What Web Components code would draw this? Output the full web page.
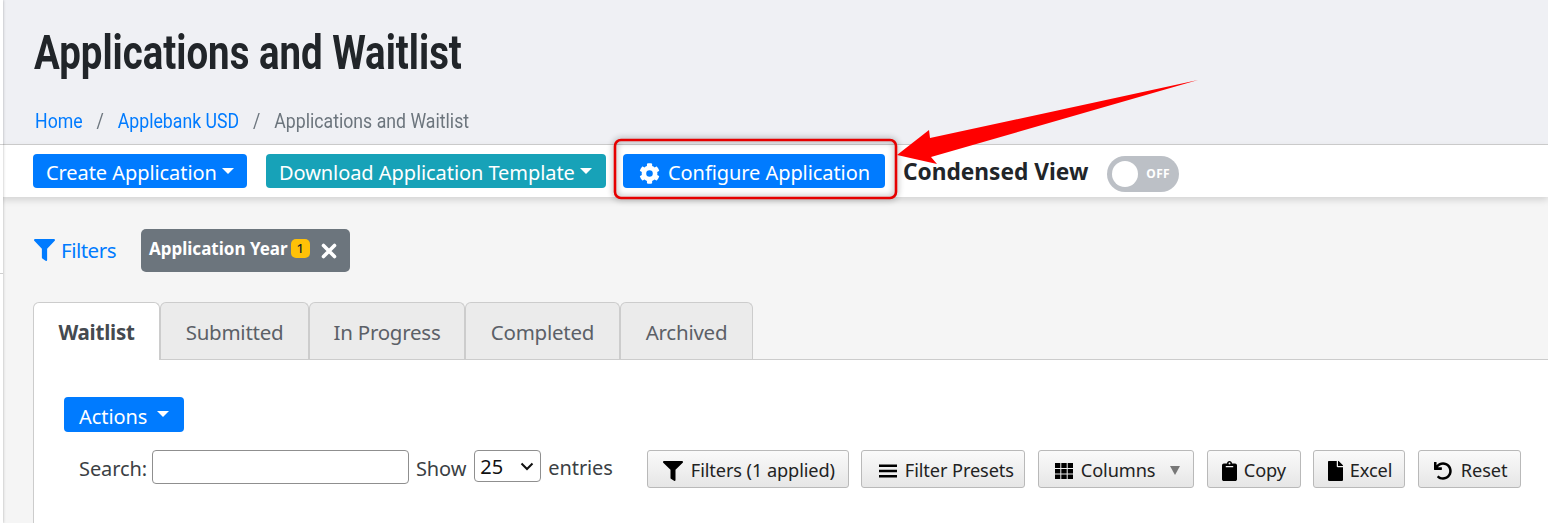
<!DOCTYPE html>
<html><head><meta charset="utf-8">
<style>
html,body{margin:0;padding:0;background:#f5f5f5;}
body{width:1548px;height:523px;overflow:hidden;font-family:"Noto Sans",sans-serif;}
</style></head><body>
<app-shell></app-shell>
<template id="t-btn"><style>
:host{display:inline-flex;align-items:center;box-sizing:border-box;height:var(--h,34px);padding:4px 0 0 var(--pl,13px);width:var(--w,auto);border-radius:4px;background:var(--bg,#007bff);color:#fff;font:20px/1 "Noto Sans",sans-serif;letter-spacing:-.07px;white-space:nowrap;gap:var(--gap,5px)}
.caret{width:0;height:0;border-left:6px solid transparent;border-right:6px solid transparent;border-top:6px solid #fff;margin-top:-5px}
svg{display:block;margin-top:-3px}
</style><slot name="icon"></slot><slot></slot><span class="caret"></span></template>
<template id="t-tool"><style>
:host{display:inline-flex;align-items:center;box-sizing:border-box;height:38px;width:var(--w);padding:3px 0 0 var(--pl,16px);border:1px solid #b9b9b9;border-radius:3px;background:linear-gradient(#fafafa,#e6e6e6);color:#222;font:18.200px/1 "Noto Sans",sans-serif;white-space:nowrap;gap:8px}
</style><slot name="icon"></slot><slot></slot></template>
<template id="t-tab"><style>
:host{display:flex;align-items:center;justify-content:center;box-sizing:border-box;height:57px;border:1px solid #ccc;border-bottom:0;border-radius:6px 6px 0 0;background:#ebebeb;color:#5b6067;font:20.5px/1 "Noto Sans",sans-serif;letter-spacing:-.25px;padding-top:3px}
:host([active]){background:#fff;height:58px;margin-bottom:-1px;font-weight:700;color:#454a50;z-index:1;position:relative;padding-top:3px;padding-bottom:2px}
</style><slot></slot></template>
<template id="t-toggle"><style>
:host{display:block;box-sizing:border-box;width:72px;height:36px;margin-top:6px;border-radius:18px;background:#bcc0c6;position:relative}
i{position:absolute;left:5px;top:5px;width:26px;height:26px;border-radius:50%;background:#fff}
b{position:absolute;left:39px;top:11.5px;font:700 12px/1 "Noto Sans",sans-serif;color:#fff;letter-spacing:.3px}
</style><i></i><b>OFF</b></template>
<template id="t-header"><style>
:host{display:block;box-sizing:border-box;height:145px;background:#eff0f4;border-bottom:1px solid #cfcfcf;padding:28px 0 0 34px}
h1{margin:0;font:700 48px/50px Roboto,sans-serif;color:#212529;transform:scaleX(.8);transform-origin:0 50%;white-space:nowrap}
nav{margin-top:30px;display:flex;font:20px/26px Roboto,sans-serif;color:#6c757d;transform:scaleX(.885);transform-origin:0 50%;margin-left:1px;white-space:nowrap}
a{color:#007bff;text-decoration:none}
s{text-decoration:none;margin:0 15.700px}
</style><h1>Applications and Waitlist</h1><nav><a>Home</a><s>/</s><a>Applebank USD</a><s>/</s><span>Applications and Waitlist</span></nav></template>
<template id="t-toolbar"><style>
:host{display:flex;align-items:center;box-sizing:border-box;height:52px;background:#fff;box-shadow:0 3px 7px rgba(0,0,0,.14);padding:0 0 0 33px;position:relative}
::slotted(span){font:700 22.700px/1 "Noto Sans",sans-serif;color:#212529;margin:2px 19px 0 18px}
</style><slot></slot></template>
<template id="t-chip"><style>
:host{display:inline-flex;align-items:center;box-sizing:border-box;height:43px;width:209px;padding:0 0 4px 8px;background:#6c757d;border-radius:5px;color:#fff;font:700 17px/1 "Noto Sans",sans-serif}
.n{display:inline-flex;align-items:center;justify-content:center;width:19px;height:19px;margin-left:3px;border-radius:5px;background:#ffc107;color:#212529;font:500 13px/1 "Noto Sans",sans-serif}
svg{margin-left:11px;margin-top:4px;display:block}
</style><slot></slot><span class="n">1</span><svg width="16" height="16" viewBox="0 0 16 16"><path d="M2.500 2.500L13.500 13.500M13.500 2.500L2.500 13.500" stroke="#fff" stroke-width="3.600" stroke-linecap="round"/></svg></template>
<template id="t-filters"><style>
:host{display:flex;align-items:center;box-sizing:border-box;height:105px;padding:0 0 0 34px}
.f{display:flex;align-items:center;color:#007bff;font:20.5px/1 "Noto Sans",sans-serif;letter-spacing:-.5px;gap:6px;margin-right:25px;padding-top:2px}
svg{fill:#007bff;display:block;margin-top:-2px}
::slotted(x-chip){margin-top:2px}
</style><span class="f"><svg width="21" height="22" viewBox="0 0 512 512" preserveAspectRatio="none"><path d="M487 0H25C3 0-9 27 7 43l185 184v205c0 8 4 15 10 20l80 56c16 11 38 0 38-20V227L505 43c16-16 4-43-18-43z"/></svg>Filters</span><slot></slot></template>
<template id="t-panel"><style>
:host{display:block;box-sizing:border-box;margin-left:33px;background:#fff;border-left:1px solid #ccc;border-top:1px solid #ccc;height:164px;padding:37px 0 0 30px}
.act{display:flex;--w:120px;--pl:15px;--gap:10px;--h:35px}
.row{display:flex;align-items:flex-start;margin-top:18px;padding-left:15px;color:#3b3f44;font:20px/1 "Noto Sans",sans-serif;letter-spacing:-.1px}
.s{display:flex;align-items:center;height:34px;gap:4px}
.s>span:not(.inp):not(.sel){padding-top:3px}
.s>span.lab{margin-right:1px}
.inp{box-sizing:border-box;width:257px;height:34px;border:1px solid #8f8f8f;border-radius:4px;background:#fff}
.sel{box-sizing:border-box;position:relative;width:67px;height:32px;border:1px solid #8f8f8f;border-radius:4px;background:#fff;color:#111;padding:1px 0 0 5px;display:flex;align-items:center;margin:0 3px 0 8px}
.sel svg{position:absolute;right:6px;top:11px}
.show{margin-left:3px}
.tools{display:flex;gap:12px;margin-left:34px}
x-tool svg{display:block}
x-tool.m{margin-left:1px}
</style><x-btn class="act">Actions</x-btn><div class="row"><div class="s"><span class="lab">Search:</span><span class="inp"></span><span class="show">Show</span></div><div class="s" style="height:32px"><span class="sel">25<svg width="14" height="9" viewBox="0 0 14 9"><path d="M1.500 1.500L7 7l5.500-5.500" fill="none" stroke="#111" stroke-width="2"/></svg></span><span>entries</span></div>
<div class="tools">
<x-tool style="--w:202px;--pl:15px"><svg slot="icon" width="20" height="20" viewBox="0 0 512 512"><path d="M487 0H25C3 0-9 27 7 43l185 184v205c0 8 4 15 10 20l80 56c16 11 38 0 38-20V227L505 43c16-16 4-43-18-43z"/></svg>Filters (1 applied)</x-tool>
<x-tool style="--w:164px;--pl:17px"><svg slot="icon" width="18" height="18" viewBox="0 0 18 18"><path d="M0 2.500h18v2.500H0zM0 7.800h18v2.500H0zM0 13h18v2.500H0z"/></svg>Filter Presets</x-tool>
<x-tool class="m" style="--w:156px"><svg slot="icon" width="18" height="18" viewBox="0 0 18 18"><path d="M0 1h5.300v5H0zM6.300 1h5.400v5H6.300zM12.700 1H18v5h-5.300zM0 7h5.300v4.500H0zM6.300 7h5.400v4.500H6.300zM12.700 7H18v4.500h-5.300zM0 12.500h5.300V17H0zM6.300 12.500h5.400V17H6.300zM12.700 12.500H18V17h-5.300z"/></svg>Columns<svg width="10" height="9" viewBox="0 0 10 9" style="margin-left:7px"><path d="M0 0h10L5 9z" fill="#777"/></svg></x-tool>
<x-tool class="m" style="--w:94px;--pl:14px"><svg slot="icon" width="15" height="20" viewBox="0 0 384 512" style="margin-right:-1px"><path d="M384 112v352c0 26.510-21.490 48-48 48H48c-26.510 0-48-21.490-48-48V112c0-26.510 21.490-48 48-48h80c0-35.290 28.710-64 64-64s64 28.710 64 64h80c26.510 0 48 21.490 48 48zM192 40c-13.255 0-24 10.745-24 24s10.745 24 24 24 24-10.745 24-24-10.745-24-24-24m96 114v-20a6 6 0 0 0-6-6H102a6 6 0 0 0-6 6v20a6 6 0 0 0 6 6h180a6 6 0 0 0 6-6z"/></svg>Copy</x-tool>
<x-tool style="--w:92px;--pl:14px"><svg slot="icon" width="15" height="20" viewBox="0 0 384 512" style="margin-right:-1px"><path d="M224 136V0H24C10.700 0 0 10.700 0 24v464c0 13.300 10.700 24 24 24h336c13.300 0 24-10.700 24-24V160H248c-13.200 0-24-10.800-24-24zm160-14.100v6.100H256V0h6.100c6.400 0 12.500 2.500 17 7l97.900 98c4.500 4.500 7 10.600 7 16.900z"/></svg>Excel</x-tool>
<x-tool class="m" style="--w:103px;--pl:15px"><svg slot="icon" width="18" height="18" viewBox="0 0 512 512" style="margin-right:1px"><path d="M212.333 224.333H12c-6.627 0-12-5.373-12-12V12C0 5.373 5.373 0 12 0h48c6.627 0 12 5.373 12 12v78.112C117.773 39.279 184.442 7.730 258.175 8.007c136.906.515 246.870 111.810 246.157 248.720C503.620 393.342 392.830 504 256 504c-64.108 0-122.530-24.290-166.513-64.167-5.099-4.623-5.334-12.559-.467-17.427l33.967-33.967c4.474-4.474 11.662-4.717 16.401-.525C170.800 415.336 211.614 432 256 432c97.260 0 176-78.720 176-176 0-97.380-78.880-176-176-176-58.496 0-110.280 28.476-142.274 72.333h98.607c6.627 0 12 5.373 12 12v48c0 6.627-5.373 12-12 12z"/></svg>Reset</x-tool>
</div></div></template>
<template id="t-shell"><style>
:host{display:block;position:relative;width:1548px;height:523px;overflow:hidden;background:#f5f5f5}
.rail{position:absolute;left:0;top:0;bottom:0;width:3px;background:#fff;box-shadow:0 0 3px rgba(0,0,0,.3);z-index:3}
.rail i{position:absolute;left:0;width:3px;height:1px;background:#cfcfcf}
.tabs{display:flex;height:57px;margin-left:33px;align-items:flex-end}
.over{position:absolute;left:0;top:0;pointer-events:none;z-index:5}
</style>
<div class="rail"><i style="top:144px"></i><i style="top:273px"></i></div>
<x-header></x-header>
<x-toolbar>
<x-btn style="--w:214px">Create Application</x-btn>
<x-btn style="--w:340px;--bg:#17a2b8;margin-left:19px">Download Application Template</x-btn>
<x-btn style="--w:262px;--pl:16px;--gap:8px;margin-left:17px" noicon><svg slot="icon" width="21" height="21" viewBox="0 0 512 512"><path fill="#fff" d="M487 316l-42-25a190 190 0 0 0 0-70l42-25c5-3 7-9 5-14-11-35-30-67-54-93-4-4-10-5-15-2l-42 24a186 186 0 0 0-61-35V27c0-6-4-11-9-12-36-8-73-8-108 0-6 1-9 6-9 12v49c-23 8-43 20-61 35L91 87c-5-3-11-2-15 2-24 26-43 58-54 93-2 5 0 11 5 14l42 25a190 190 0 0 0 0 70l-42 25c-5 3-7 9-5 14 11 35 30 67 54 93 4 4 10 5 15 2l42-24c18 15 38 27 61 35v49c0 6 4 11 9 12 36 8 73 8 108 0 6-1 9-6 9-12v-49c23-8 43-20 61-35l42 24c5 3 11 2 15-2 24-26 43-58 54-93 2-5 0-11-5-14zM256 336a80 80 0 1 1 0-160 80 80 0 0 1 0 160z"/></svg>Configure Application</x-btn>
<span>Condensed View</span>
<x-toggle></x-toggle>
</x-toolbar>
<x-filters><x-chip>Application Year</x-chip></x-filters>
<div class="tabs">
<x-tab active style="width:127px">Waitlist</x-tab>
<x-tab style="width:149px">Submitted</x-tab>
<x-tab style="width:156px">In Progress</x-tab>
<x-tab style="width:155px">Completed</x-tab>
<x-tab style="width:133px">Archived</x-tab>
</div>
<x-panel></x-panel>
<svg class="over" width="1548" height="523" viewBox="0 0 1548 523">
<rect x="615" y="140" width="281" height="58" rx="6" fill="none" stroke="#e60000" stroke-width="2.600" style="filter:drop-shadow(0 0 3px rgba(0,0,0,.45))"/>
<path fill="#f00" d="M1198 80L930 138 929 130 897 155 937 164 931 157Z"/>
</svg></template>
<script>
const def=(n,t,cb)=>customElements.define(n,class extends HTMLElement{constructor(){super();this.attachShadow({mode:"open"}).appendChild(document.getElementById(t).content.cloneNode(true));}connectedCallback(){cb&&cb(this)}});
def("x-btn","t-btn",e=>{if(e.hasAttribute("noicon"))e.shadowRoot.querySelector(".caret")?.remove()});
def("x-tool","t-tool");def("x-tab","t-tab");def("x-toggle","t-toggle");def("x-header","t-header");def("x-toolbar","t-toolbar");def("x-chip","t-chip");def("x-filters","t-filters");def("x-panel","t-panel");def("app-shell","t-shell");
</script>
</body></html>
